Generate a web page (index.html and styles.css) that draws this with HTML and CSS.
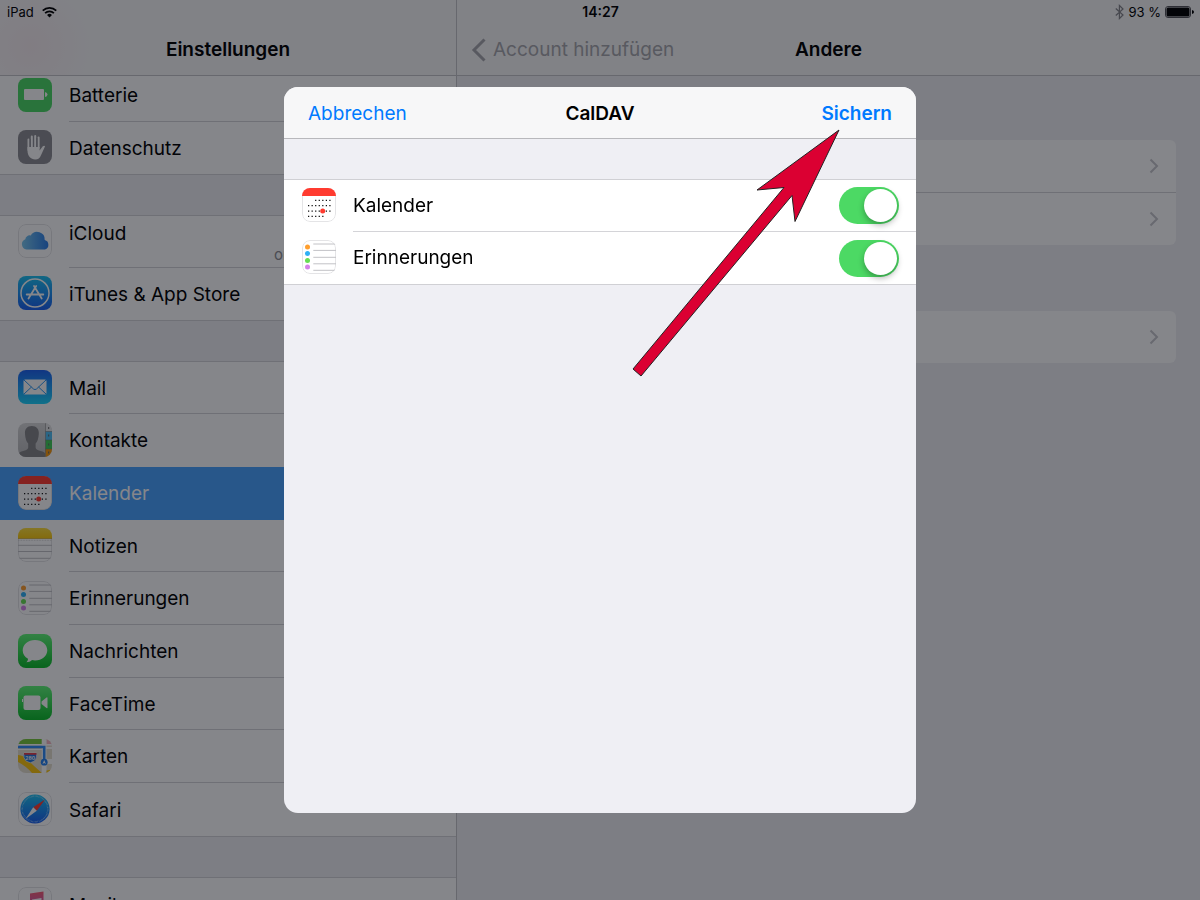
FILE: index.html
```html
<!DOCTYPE html>
<html lang="de">
<head>
    <meta charset="UTF-8">
    <meta name="viewport" content="width=device-width, initial-scale=1.0">
    <title>Einstellungen - CalDAV</title>
    <link rel="stylesheet" href="styles.css">
</head>
<body>
    <!-- Gradients, must stay rendered -->
    <svg class="gradients" aria-hidden="true">
        <defs>
            <linearGradient id="gStore" x1="0" y1="0" x2="0" y2="1"><stop offset="0" stop-color="#1dc3f2"/><stop offset="1" stop-color="#1a5ff0"/></linearGradient>
            <linearGradient id="gMail" x1="0" y1="0" x2="0" y2="1"><stop offset="0" stop-color="#1d62f0"/><stop offset="1" stop-color="#1ad5fd"/></linearGradient>
            <linearGradient id="gGreen" x1="0" y1="0" x2="0" y2="1"><stop offset="0" stop-color="#5ff777"/><stop offset="1" stop-color="#0bbd29"/></linearGradient>
            <linearGradient id="gCloud" x1="0" y1="0" x2="1" y2="0"><stop offset="0" stop-color="#7cc9ee"/><stop offset="1" stop-color="#2a7de8"/></linearGradient>
            <linearGradient id="gNote" x1="0" y1="0" x2="0" y2="1"><stop offset="0" stop-color="#ffdf3c"/><stop offset="1" stop-color="#fccb0c"/></linearGradient>
            <linearGradient id="gMusic" x1="0" y1="0" x2="0" y2="1"><stop offset="0" stop-color="#fb5c74"/><stop offset="1" stop-color="#b05ce0"/></linearGradient>
            <linearGradient id="gGrey" x1="0" y1="0" x2="0" y2="1"><stop offset="0" stop-color="#d8d8d8"/><stop offset="1" stop-color="#b9b9bb"/></linearGradient>
        </defs>
    </svg>

    <!-- Icons -->
    <svg class="sprite" aria-hidden="true">
        <symbol id="battery" viewBox="0 0 34 34">
            <rect width="34" height="34" fill="#4cd964"/>
            <rect x="6" y="11" width="20" height="11" rx="1" fill="#fff"/>
            <path d="M27 14q2.500 .5 2.500 2.500t-2.500 2.500z" fill="#fff"/>
        </symbol>
        <symbol id="privacy" viewBox="0 0 34 34">
            <rect width="34" height="34" fill="#8e8e93"/>
            <g stroke="#fff" stroke-width="2" stroke-linecap="round" fill="none">
                <path d="M10.500 20V9.500M13.800 18V6.500M17.200 18V6M20.600 18V7.500"/>
            </g>
            <path d="M9.500 17h12.100v3.500l3.200-4.300q1.500-1 2.300 0l-4 8.800q-1.700 4.500-5.800 4.500c-4.600 0-7.800-3.500-7.800-9z" fill="#fff"/>
            <path d="M12.100 9v8M15.500 8v9M18.900 8v9" stroke="#8e8e93" stroke-width="1"/>
        </symbol>
        <symbol id="icloud" viewBox="0 0 34 34">
            <rect x=".5" y=".5" width="33" height="33" rx="7.500" fill="#fff" stroke="#e4e4e6"/>
            <path d="M8.500 25.500a5.300 5.300 0 0 1-1.200-10.200 4.300 4.300 0 0 1 5.400-3.800 7.600 7.600 0 0 1 14 4.600 4.900 4.900 0 0 1 .3 9.400z" fill="url(#gCloud)"/>
        </symbol>
        <symbol id="store" viewBox="0 0 34 34">
            <rect width="34" height="34" fill="url(#gStore)"/>
            <circle cx="17" cy="17" r="14" fill="none" stroke="#fff" stroke-width="1.500"/>
            <path d="M18.200 10l-7.700 12.500M16 10l7.700 12.500M8.700 18.500h16.600" fill="none" stroke="#fff" stroke-width="1.800" stroke-linecap="round"/>
        </symbol>
        <symbol id="mail" viewBox="0 0 34 34">
            <rect width="34" height="34" fill="url(#gMail)"/>
            <rect x="5.500" y="9.500" width="23" height="15" rx="1.500" fill="#fff"/>
            <path d="M6 10l9.500 9q1.500 1.200 3 0l9.500-9M6 24l7.500-7M28 24l-7.500-7" fill="none" stroke="#2a98f3" stroke-width="1"/>
        </symbol>
        <symbol id="contacts" viewBox="0 0 34 34">
            <rect width="34" height="34" fill="url(#gGrey)"/>
            <path d="M1 34v-4q1-1.300 5-2.200 3.800-.8 4.200-3.300v-4Q7.500 18 7 11c-.5-5 2.200-8 6.800-8s7.500 3 7 8q-.5 7-3.200 9.500v4q.4 2.500 4.200 3.300 4.200.9 5.200 2.200v4z" fill="#858587"/>
            <path d="M27.500 0H34v8.500h-6.500z" fill="#e6e6e6"/>
            <path d="M27.500 8.500H34V17h-6.500z" fill="#50c0f5"/>
            <path d="M27.500 17H34v9h-6.500z" fill="#40ce57"/>
            <path d="M27.500 26H34v8h-6.500z" fill="#fb9a0a"/>
            <path d="M27.500 0v34M27.500 8.500H34M27.500 17H34M27.500 26H34" stroke="#777" stroke-width=".5"/>
            <path d="M30.700 4v2M30.700 11.500v2M30.700 20.500v2M30.700 28.500v2" stroke="#666" stroke-width="1"/>
        </symbol>
        <symbol id="calendar" viewBox="0 0 34 34">
            <rect x=".5" y=".5" width="33" height="33" rx="7.500" fill="#fff" stroke="#e4e4e6"/>
            <path d="M0 0h34v8H0z" fill="#ff3b30"/>
            <g stroke="#111" stroke-width="1.200" stroke-dasharray="1.250 2.300">
                <path d="M13.100 12.400h16M6 17.700h23M6 23.100h23M6 28.400h16"/>
            </g>
            <circle cx="20.700" cy="23.100" r="2.500" fill="#ff3b30"/>
        </symbol>
        <symbol id="notes" viewBox="0 0 34 34">
            <rect x=".5" y=".5" width="33" height="33" rx="7.500" fill="#fff" stroke="#e4e4e6"/>
            <path d="M0 0h34v10.500H0z" fill="url(#gNote)"/>
            <path d="M0 10.500h34" stroke="#c9a52a" stroke-width=".7"/>
            <path d="M0 12.300h34" stroke="#c8c8c8" stroke-width=".8" stroke-dasharray=".8 .8"/>
            <path d="M0 17.300h34M0 23.500h34M0 30.300h34" stroke="#c2c2c6" stroke-width="1"/>
        </symbol>
        <symbol id="reminders" viewBox="0 0 34 34">
            <rect x=".5" y=".5" width="33" height="33" rx="7.500" fill="#fff" stroke="#e4e4e6"/>
            <path d="M11.300 4H34M11.300 10.400H34M11.300 17.300H34M11.300 23.800H34M11.300 30.300H34" stroke="#c2c2c6" stroke-width="1"/>
            <circle cx="5.500" cy="7" r="2.500" fill="#ff9f2e"/>
            <circle cx="5.500" cy="13.600" r="2.500" fill="#2fb0f5"/>
            <circle cx="5.500" cy="20.400" r="2.500" fill="#67de53"/>
            <circle cx="5.500" cy="27" r="2.500" fill="#d582ea"/>
        </symbol>
        <symbol id="messages" viewBox="0 0 34 34">
            <rect width="34" height="34" fill="url(#gGreen)"/>
            <path d="M17 6c-7 0-12.300 4.500-12.300 10.300 0 3.700 2 6.700 5.300 8.500 0 1.500-.7 2.700-1.600 3.500 2 0 4.200-.8 5.600-2.200 1 .3 2 .4 3 .4 7 0 12.300-4.500 12.300-10.200S24 6 17 6z" fill="#fff"/>
        </symbol>
        <symbol id="facetime" viewBox="0 0 34 34">
            <rect width="34" height="34" fill="url(#gGreen)"/>
            <rect x="5.500" y="9.500" width="17" height="14.500" rx="2" fill="#fff"/>
            <path d="M23.500 15.500l5-4q1-.5 1 .5v9.500q0 1-1 .5l-5-4zM4 13h1v3H4z" fill="#fff"/>
        </symbol>
        <symbol id="maps" viewBox="0 0 34 34">
            <rect width="34" height="34" fill="#e6dfcf"/>
            <path d="M0 0h24v5H0z" fill="#78c83c"/>
            <path d="M28.500 0H34v5h-5.500z" fill="#f5b5c0"/>
            <path d="M0 16q6 .5 10 5t14 13H14Q8 27 0 23z" fill="#fdc70d"/>
            <path d="M0 5h34v1.500H0zM0 10h24v1H0zM23.700 0h4.800v34h-4.800zM28.500 8H34v2h-5.500zM28.500 20H34v5h-5.500z" fill="#fff"/>
            <path d="M28.500 34V31.500l5.500-1v3.500z" fill="#fdc70d"/>
            <path d="M0 8h26.200v13" fill="none" stroke="#2f8cf5" stroke-width="2.600"/>
            <circle cx="26.200" cy="23.200" r="3.400" fill="#2280f0"/>
            <path d="M26.200 21l1.700 4-1.700-1-1.700 1z" fill="#fff"/>
            <path d="M6 14h12.500q1 5.500-2 8l-4.200 1.800L8 22q-3-2.500-2-8z" fill="#2678dc" stroke="#fff" stroke-width=".6"/>
            <path d="M6 14h12.500v1.800H6z" fill="#e8404a"/>
            <text x="12.200" y="20.800" text-anchor="middle" class="shield">280</text>
        </symbol>
        <symbol id="safari" viewBox="0 0 34 34">
            <rect x=".5" y=".5" width="33" height="33" rx="7.500" fill="#fff" stroke="#e4e4e6"/>
            <circle cx="17" cy="17" r="14.600" fill="url(#gStore)"/>
            <circle cx="17" cy="17" r="12.800" fill="none" stroke="#bfe6fb" stroke-width="1.400" stroke-dasharray=".4 .9"/>
            <path d="M27 7.500l-8.200 11.200-3.600-3.400z" fill="#ff3b30"/>
            <path d="M7.500 27l7.700-11.700 3.600 3.400z" fill="#fff"/>
        </symbol>
        <symbol id="music" viewBox="0 0 34 34">
            <rect x=".5" y=".5" width="33" height="33" rx="7.500" fill="#fff" stroke="#e4e4e6"/>
            <path d="M12 6.500L25.500 4.500v18a3.500 3 0 1 1-2-2.600V11L14 12.500v13a3.500 3 0 1 1-2-2.600z" fill="url(#gMusic)"/>
        </symbol>
        <symbol id="chevron" viewBox="0 0 10 16">
            <path d="M1.500 1.500L8 8l-6.500 6.500" fill="none" stroke="#c7c7cc" stroke-width="2"/>
        </symbol>
    </svg>

    <div class="app">
        <div class="status">
            <div class="status-side">
                <span>iPad</span>
                <svg width="15" height="12" viewBox="0 0 14 11">
                    <path d="M.7 4.200a9 9 0 0 1 12.600 0M2.900 6.500a5.900 5.900 0 0 1 8.200 0" fill="none" stroke="#000" stroke-width="1.600"/>
                    <path d="M4.700 8.200a3.300 3.300 0 0 1 4.600 0L7 10.600z"/>
                </svg>
            </div>
            <div class="clock">14:27</div>
            <div class="status-side right">
                <svg width="9" height="16" viewBox="0 0 9 16">
                    <path d="M.8 4.500L8 11l-3.600 3.500v-13L8 5 .8 11.500" fill="none" stroke="#85858a" stroke-width="1.200"/>
                </svg>
                <span>93 %</span>
                <svg width="29" height="12" viewBox="0 0 29 12">
                    <rect x=".5" y=".5" width="25" height="11" rx="2.500" fill="none" stroke="#55555a"/>
                    <rect x="1.500" y="1.500" width="23" height="9" rx="1.500"/>
                    <path d="M27 4q2 .4 2 2t-2 2z"/>
                </svg>
            </div>
        </div>

        <aside class="sidebar">
            <header class="navbar glow">
                <h1>Einstellungen</h1>
            </header>
            <nav class="list">
                <div class="group">
                    <a class="row" href="#"><svg class="icon"><use href="#battery"/></svg><span class="label">Batterie</span></a>
                    <a class="row short" href="#"><svg class="icon"><use href="#privacy"/></svg><span class="label">Datenschutz</span></a>
                </div>
                <div class="group">
                    <a class="row short" href="#">
                        <svg class="icon"><use href="#icloud"/></svg>
                        <span class="label two-lines">iCloud <small>om</small></span>
                    </a>
                    <a class="row short" href="#"><svg class="icon"><use href="#store"/></svg><span class="label">iTunes &amp; App Store</span></a>
                </div>
                <div class="group">
                    <a class="row short" href="#"><svg class="icon"><use href="#mail"/></svg><span class="label">Mail</span></a>
                    <a class="row" href="#"><svg class="icon"><use href="#contacts"/></svg><span class="label">Kontakte</span></a>
                    <a class="row active" href="#"><svg class="icon"><use href="#calendar"/></svg><span class="label">Kalender</span></a>
                    <a class="row short" href="#"><svg class="icon"><use href="#notes"/></svg><span class="label">Notizen</span></a>
                    <a class="row" href="#"><svg class="icon"><use href="#reminders"/></svg><span class="label">Erinnerungen</span></a>
                    <a class="row" href="#"><svg class="icon"><use href="#messages"/></svg><span class="label">Nachrichten</span></a>
                    <a class="row short" href="#"><svg class="icon"><use href="#facetime"/></svg><span class="label">FaceTime</span></a>
                    <a class="row" href="#"><svg class="icon"><use href="#maps"/></svg><span class="label">Karten</span></a>
                    <a class="row" href="#"><svg class="icon"><use href="#safari"/></svg><span class="label">Safari</span></a>
                </div>
                <div class="group">
                    <a class="row" href="#"><svg class="icon"><use href="#music"/></svg><span class="label">Musik</span></a>
                </div>
            </nav>
        </aside>

        <main class="detail">
            <header class="navbar">
                <button class="back" type="button">
                    <svg width="15" height="24" viewBox="0 0 15 24"><path d="M13.500 1.500L3 12l10.500 10.500" fill="none" stroke="currentColor" stroke-width="3"/></svg>
                    Account hinzufügen
                </button>
                <h2>Andere</h2>
            </header>
            <div class="cards">
                <div class="card">
                    <a class="card-row" href="#" aria-label="LDAP"><svg width="10" height="16"><use href="#chevron"/></svg></a>
                    <a class="card-row" href="#" aria-label="CardDAV"><svg width="10" height="16"><use href="#chevron"/></svg></a>
                </div>
                <div class="card">
                    <a class="card-row" href="#" aria-label="CalDAV"><svg width="10" height="16"><use href="#chevron"/></svg></a>
                </div>
            </div>
        </main>
    </div>

    <div class="overlay">
        <section class="modal" role="dialog" aria-labelledby="modalTitle">
            <header class="modal-header">
                <button class="cancel" type="button">Abbrechen</button>
                <h2 id="modalTitle">CalDAV</h2>
                <button class="save" type="button">Sichern</button>
            </header>
            <div class="options">
                <div class="row short">
                    <svg class="icon"><use href="#calendar"/></svg>
                    <div class="label">
                        <label for="kalender">Kalender</label>
                        <input class="switch" type="checkbox" id="kalender" checked>
                    </div>
                </div>
                <div class="row short">
                    <svg class="icon"><use href="#reminders"/></svg>
                    <div class="label">
                        <label for="erinnerungen">Erinnerungen</label>
                        <input class="switch" type="checkbox" id="erinnerungen" checked>
                    </div>
                </div>
            </div>
            <svg class="arrow" width="208" height="248" viewBox="0 0 208 248" aria-hidden="true">
                <path d="M207 1L125 61l27-2.500L1 240l8 7L160 66.500l3 26z" fill="#db0032" stroke="#222" stroke-width="1"/>
            </svg>
        </section>
    </div>
</body>
</html>
```
FILE: styles.css
```css
* {
    margin: 0;
    padding: 0;
    box-sizing: border-box;
}

body {
    font-family: Inter, 'Liberation Sans', sans-serif;
    font-size: 19px;
    line-height: 24px;
    color: #000;
    background-color: #efeff4;
    overflow: hidden;
}

a {
    color: inherit;
    text-decoration: none;
}

button {
    font: inherit;
    background: none;
    border: none;
    cursor: pointer;
}

h1, h2 {
    font-size: 19px;
    font-weight: 600;
}

.gradients {
    position: absolute;
    width: 0;
    height: 0;
}

.sprite {
    display: none;
}

.shield {
    font-size: 5px;
    font-weight: 700;
    fill: #fff;
}

.app {
    display: flex;
    height: 100vh;
    overflow: hidden;
}

/* Status bar, lies over both navbars */
.status {
    position: absolute;
    top: 0;
    left: 0;
    right: 0;
    z-index: 2;
    display: grid;
    grid-template-columns: 1fr auto 1fr;
    align-items: center;
    height: 24px;
    padding: 0 6px 0 7px;
    font-size: 13px;
    line-height: 16px;
}

.status-side {
    display: flex;
    align-items: center;
    gap: 8px;
}

.status-side.right {
    justify-content: flex-end;
    gap: 4px;
}

.clock {
    font-size: 14px;
    font-weight: 600;
}

/* Navbars */
.navbar {
    position: relative;
    z-index: 1;
    display: grid;
    grid-template-columns: 1fr auto 1fr;
    align-items: center;
    height: 76px;
    padding: 24px 14px 0;
    background-color: #f7f7f8;
    border-bottom: 1px solid #c4c4c8;
}

.navbar h1,
.navbar h2 {
    grid-column: 2;
}

.navbar.glow {
    background-image: radial-gradient(circle at 30px 46px, #f8edf0, #f7f7f8 60px);
}

.back {
    display: flex;
    align-items: center;
    gap: 7px;
    color: #a8a8ac;
    white-space: nowrap;
}

/* Sidebar */
.sidebar {
    width: 38%;
    background-color: #efeff4;
}

.list {
    display: flex;
    flex-direction: column;
    gap: 40px;
    margin-top: -8px;
}

.group {
    background-color: #fff;
    border-top: 1px solid #d4d4d8;
    border-bottom: 1px solid #d4d4d8;
}

.row {
    display: flex;
    align-items: center;
    gap: 17px;
    height: 53px;
    padding-left: 18px;
}

.row.short {
    height: 52px;
}

.icon {
    flex: none;
    width: 34px;
    height: 34px;
    margin-bottom: 2px;
    border-radius: 8px;
    overflow: hidden;
}

.label {
    display: flex;
    flex: 1;
    align-items: center;
    height: 100%;
    padding-top: 2px;
    border-bottom: 1px solid #d4d4d8;
}

.row:last-child .label {
    border-bottom: none;
}

.row.active {
    background-color: #4aa3ff;
    color: #fff;
}

.row.active .label,
.row:has(+ .active) .label {
    border-color: transparent;
}

.label.two-lines {
    display: block;
    padding-top: 6px;
}

.label small {
    display: block;
    padding-left: 205px;
    font-size: 15px;
    line-height: 18px;
    color: #8e8e93;
}

/* Detail pane */
.detail {
    flex: 1;
    background-color: #efeff4;
    border-left: 1px solid #c4c4c8;
}

.cards {
    display: flex;
    flex-direction: column;
    gap: 66px;
    padding: 64px 24px;
}

.card {
    background-color: #fff;
    border-radius: 6px;
}

.card-row {
    display: flex;
    align-items: center;
    justify-content: flex-end;
    height: 52px;
    padding-right: 17px;
}

.card-row + .card-row {
    height: 53px;
    border-top: 1px solid #d4d4d8;
}

/* Modal */
.overlay {
    position: fixed;
    inset: 0;
    z-index: 3;
    display: flex;
    align-items: center;
    justify-content: center;
    background-color: rgba(6, 8, 16, 0.49);
}

.modal {
    position: relative;
    width: 632px;
    height: 726px;
    background-color: #efeff4;
    border-radius: 14px;
}

.modal-header {
    display: grid;
    grid-template-columns: 1fr auto 1fr;
    align-items: center;
    height: 52px;
    padding: 2px 24px 0;
    background-color: #f7f7f8;
    border-bottom: 1px solid #b8b8bc;
    border-radius: 14px 14px 0 0;
}

.cancel {
    justify-self: start;
    color: #007aff;
}

.save {
    justify-self: end;
    font-weight: 600;
    color: #007aff;
}

.options {
    margin-top: 40px;
    background-color: #fff;
    border-top: 1px solid #d0d0d4;
    border-bottom: 1px solid #d0d0d4;
}

.options .label {
    justify-content: space-between;
    padding-top: 0;
    padding-right: 17px;
}

.switch {
    appearance: none;
    width: 60px;
    height: 37px;
    padding: 2px;
    border-radius: 19px;
    background-color: #e5e5ea;
    cursor: pointer;
}

.switch::before {
    content: "";
    display: block;
    width: 33px;
    height: 33px;
    border-radius: 50%;
    background-color: #fff;
    box-shadow: 0 3px 6px rgba(0, 0, 0, 0.3);
}

.switch:checked {
    background-color: #4cd964;
}

.switch:checked::before {
    margin-left: auto;
}

.arrow {
    position: absolute;
    top: 42px;
    right: 76px;
    pointer-events: none;
}
```
